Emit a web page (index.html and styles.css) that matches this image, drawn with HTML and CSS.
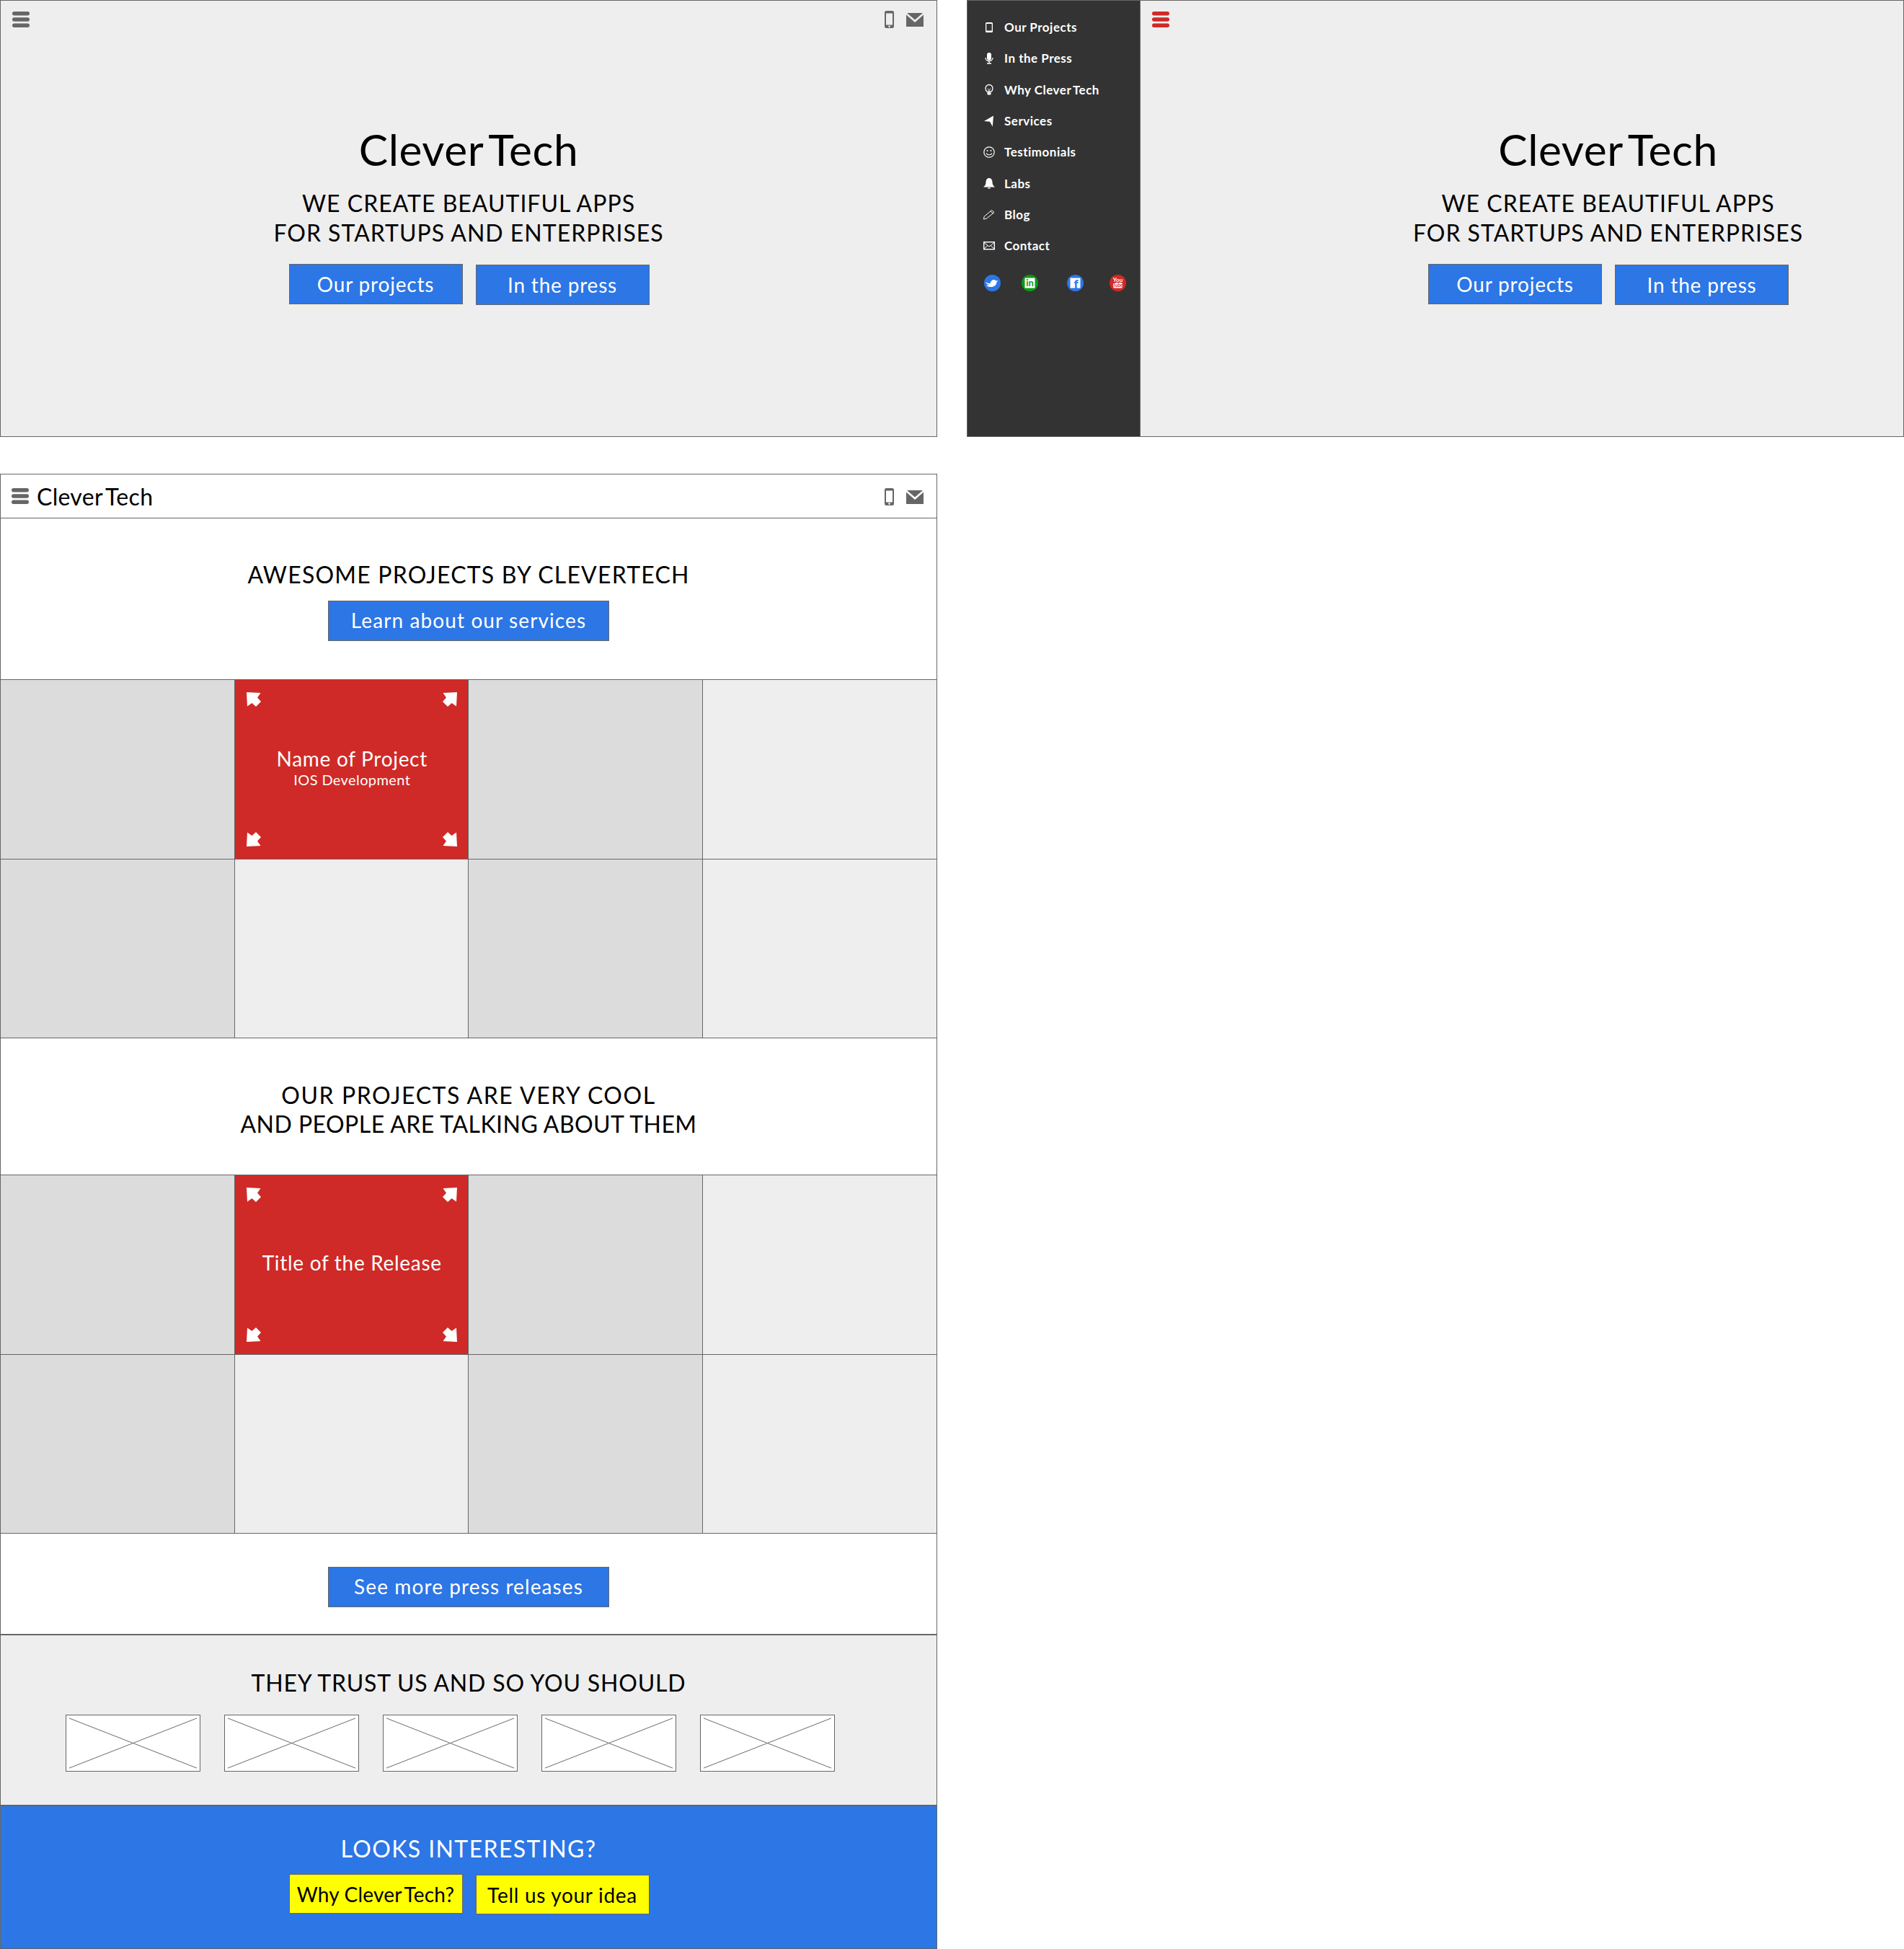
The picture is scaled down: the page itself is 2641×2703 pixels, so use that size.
FILE: index.html
```html
<!DOCTYPE html>
<html lang="en">
<head>
  <meta charset="UTF-8" />
  <title>CleverTech</title>
  <link rel="stylesheet" href="styles.css">
</head>
<body>

  <svg class="sprites" xmlns="http://www.w3.org/2000/svg">
    <symbol id="i-menu" viewBox="0 0 24 22">
      <rect x="0" y="0" width="24" height="5.5" rx="2.7"/>
      <rect x="0" y="8.2" width="24" height="5.5" rx="2.7"/>
      <rect x="0" y="16.5" width="24" height="5.5" rx="2.7"/>
    </symbol>
    <symbol id="i-phone" viewBox="0 0 13 24">
      <path fill-rule="evenodd" d="M2.5 0h8A2.5 2.5 0 0 1 13 2.5v19a2.500 2.500 0 0 1-2.500 2.500h-8A2.500 2.500 0 0 1 0 21.500v-19A2.500 2.500 0 0 1 2.500 0zM2 3.500V19.500H11V3.500zM6.500 20.300a1.300 1.300 0 1 0 .01 0z"/>
    </symbol>
    <symbol id="i-mail" viewBox="0 0 24 19">
      <path d="M1 0H23L12 9.500zM0 2.500L12 13 24 2.500V19H0z"/>
    </symbol>
    <symbol id="i-arrow" viewBox="0 0 20 20">
      <path d="M0 0L19.500 1 15 7.500 20 13 13 20 7.500 15 1 19.500z" stroke-linejoin="round"/>
    </symbol>
    <symbol id="i-mic" viewBox="0 0 16 16">
      <rect x="5" y="0" width="6" height="10.500" rx="3"/>
      <path d="M3 7c0 6 10 6 10 0" fill="none" stroke="#fff" stroke-width="1.300"/>
      <path d="M8 12v2.500M5 15h6" fill="none" stroke="#fff" stroke-width="1.300"/>
    </symbol>
    <symbol id="i-bulb" viewBox="0 0 16 16">
      <path d="M5.500 11.500C4 10.500 3 9 3 6.500a5 5 0 0 1 10 0c0 2.500-1 4-2.500 5z" fill="none" stroke="#fff" stroke-width="1.300"/>
      <path d="M6 6.500l1.200 1.500v3M10 6.500L8.800 8v3" fill="none" stroke="#fff" stroke-width=".8"/>
      <rect x="5.500" y="12.300" width="5" height="3.200" rx="1"/>
    </symbol>
    <symbol id="i-send" viewBox="0 0 16 16">
      <path d="M14 0.500L12.800 15.500 9 8.700 1 8z"/>
    </symbol>
    <symbol id="i-smile" viewBox="0 0 16 16">
      <circle cx="8" cy="8" r="7.200" fill="none" stroke="#fff" stroke-width="1.200"/>
      <circle cx="5.500" cy="6" r="1"/>
      <circle cx="10.500" cy="6" r="1"/>
      <path d="M4 9.500c1.500 3 6.500 3 8 0" fill="none" stroke="#fff" stroke-width="1.200"/>
    </symbol>
    <symbol id="i-bell" viewBox="0 0 16 16">
      <path d="M8 1c3 0 4.500 2.500 4.500 5.500 0 3 1 5 3.500 7H0c2.500-2 3.500-4 3.500-7C3.500 3.500 5 1 8 1z"/>
      <path d="M6 14.300h4a2 1.500 0 0 1-4 0z"/>
    </symbol>
    <symbol id="i-pencil" viewBox="0 0 16 16">
      <path d="M1 11.500L11.500 2.500 15 5.500 4.500 14 .5 15z" fill="none" stroke="#fff" stroke-width="1"/>
      <path d="M10 4l3.500 3" fill="none" stroke="#fff" stroke-width="1"/>
    </symbol>
    <symbol id="i-envelope" viewBox="0 0 16 16">
      <rect x=".7" y="2.700" width="14.600" height="10" fill="none" stroke="#fff" stroke-width="1.400"/>
      <path d="M1 3.500l7 5.500 7-5.500M1 12l5-4.500M15 12l-5-4.500" fill="none" stroke="#fff" stroke-width="1"/>
    </symbol>
    <symbol id="i-outline-phone" viewBox="0 0 10 14">
      <path fill="#fff" fill-rule="evenodd" d="M1.500 0h7A1.500 1.500 0 0 1 10 1.500v11A1.500 1.500 0 0 1 8.500 14h-7A1.500 1.500 0 0 1 0 12.500v-11A1.500 1.500 0 0 1 1.500 0zM1.300 2v9.500h7.400V2z"/>
    </symbol>
  </svg>

  <!-- landing -->
  <section class="frame frame-hero">
    <header class="topbar">
      <svg class="icon-menu"><use href="#i-menu"/></svg>
      <div class="top-icons">
        <svg class="icon-phone"><use href="#i-phone"/></svg>
        <svg class="icon-mail"><use href="#i-mail"/></svg>
      </div>
    </header>
    <div class="hero">
      <h1 class="brand"><span class="brand-first">Clever</span>Tech</h1>
      <p class="headline">WE CREATE BEAUTIFUL APPS<br>FOR STARTUPS AND ENTERPRISES</p>
      <div class="btn-row">
        <a class="btn">Our projects</a>
        <a class="btn low">In the press</a>
      </div>
    </div>
  </section>

  <!-- landing with menu open -->
  <section class="frame frame-open">
    <nav class="sidebar">
      <ul class="nav-list">
        <li><svg class="nav-icon nav-phone"><use href="#i-outline-phone"/></svg><span>Our Projects</span></li>
        <li><svg class="nav-icon"><use href="#i-mic"/></svg><span>In the Press</span></li>
        <li><svg class="nav-icon"><use href="#i-bulb"/></svg><span>Why <span class="brand-first">Clever</span>Tech</span></li>
        <li><svg class="nav-icon"><use href="#i-send"/></svg><span>Services</span></li>
        <li><svg class="nav-icon"><use href="#i-smile"/></svg><span>Testimonials</span></li>
        <li><svg class="nav-icon"><use href="#i-bell"/></svg><span>Labs</span></li>
        <li><svg class="nav-icon"><use href="#i-pencil"/></svg><span>Blog</span></li>
        <li><svg class="nav-icon"><use href="#i-envelope"/></svg><span>Contact</span></li>
      </ul>
      <div class="social">
        <svg viewBox="0 0 23 23"><circle cx="11.500" cy="11.500" r="11.500" fill="#2c76e6"/><path fill="#fff" d="M2 10c2 1.500 4 2 6.500 2 .5-3 2.500-5 5-5 1.500 0 2.500.7 3 1.500l3-.5-2 2c0 4-3 7-8 7-2.500 0-5-.8-6.500-2.200 1.500 0 2.800-.3 3.800-1-2.500-.5-4.300-1.800-4.800-3.800z"/></svg>
        <svg viewBox="0 0 23 23"><circle cx="11.500" cy="11.500" r="11.500" fill="#0a9a16"/><rect x="4.500" y="4.500" width="14" height="14" fill="#fff"/><text x="11.500" y="16" class="mark mark-in">in</text></svg>
        <svg viewBox="0 0 23 23"><circle cx="11.500" cy="11.500" r="11.500" fill="#2c76e6"/><rect x="4.500" y="4.500" width="14" height="14" fill="#fff"/><text x="12.500" y="18.500" class="mark mark-f">f</text></svg>
        <svg viewBox="0 0 23 23"><circle cx="11.500" cy="11.500" r="11.500" fill="#cf2a27"/><text x="11.500" y="9.500" class="mark mark-yt" fill="#fff">You</text><rect x="5" y="11" width="13" height="7.500" rx="2" fill="#fff"/><text x="11.500" y="17" class="mark mark-tube">Tube</text></svg>
      </div>
    </nav>
    <div class="main-pane">
      <header class="topbar">
        <svg class="icon-menu red"><use href="#i-menu"/></svg>
      </header>
      <div class="hero">
        <h1 class="brand"><span class="brand-first">Clever</span>Tech</h1>
        <p class="headline">WE CREATE BEAUTIFUL APPS<br>FOR STARTUPS AND ENTERPRISES</p>
        <div class="btn-row">
          <a class="btn">Our projects</a>
          <a class="btn low">In the press</a>
        </div>
      </div>
    </div>
  </section>

  <!-- scrolled page -->
  <section class="frame frame-page">
    <header class="pagebar">
      <div class="pagebar-left">
        <svg class="icon-menu"><use href="#i-menu"/></svg>
        <span class="brand-small"><span class="brand-first">Clever</span>Tech</span>
      </div>
      <div class="top-icons">
        <svg class="icon-phone"><use href="#i-phone"/></svg>
        <svg class="icon-mail"><use href="#i-mail"/></svg>
      </div>
    </header>

    <div class="intro">
      <h2 class="title title-wide">AWESOME PROJECTS BY CLEVERTECH</h2>
      <a class="btn wide">Learn about our services</a>
    </div>

    <div class="tiles">
      <div class="tile dark"></div>
      <div class="tile active">
        <svg class="arrow tl"><use href="#i-arrow"/></svg>
        <svg class="arrow tr"><use href="#i-arrow"/></svg>
        <svg class="arrow bl"><use href="#i-arrow"/></svg>
        <svg class="arrow br"><use href="#i-arrow"/></svg>
        <div class="tile-name">Name of Project</div>
        <div class="tile-sub">IOS Development</div>
      </div>
      <div class="tile dark"></div>
      <div class="tile"></div>
      <div class="tile dark"></div>
      <div class="tile"></div>
      <div class="tile dark"></div>
      <div class="tile"></div>
    </div>

    <div class="statement">
      <h2 class="title title-tight"><span class="spread">OUR PROJECTS ARE VERY COOL</span><br>AND PEOPLE ARE TALKING ABOUT THEM</h2>
    </div>

    <div class="tiles">
      <div class="tile dark"></div>
      <div class="tile active">
        <svg class="arrow tl"><use href="#i-arrow"/></svg>
        <svg class="arrow tr"><use href="#i-arrow"/></svg>
        <svg class="arrow bl"><use href="#i-arrow"/></svg>
        <svg class="arrow br"><use href="#i-arrow"/></svg>
        <div class="tile-name">Title of the Release</div>
      </div>
      <div class="tile dark"></div>
      <div class="tile"></div>
      <div class="tile dark"></div>
      <div class="tile"></div>
      <div class="tile dark"></div>
      <div class="tile"></div>
    </div>

    <div class="more">
      <a class="btn wide">See more press releases</a>
    </div>

    <div class="trust">
      <h2 class="title">THEY TRUST US AND SO YOU SHOULD</h2>
      <div class="logos">
        <svg class="logo" viewBox="0 0 187 79" preserveAspectRatio="none"><path d="M4 4L183 75M183 4L4 75"/></svg>
        <svg class="logo" viewBox="0 0 187 79" preserveAspectRatio="none"><path d="M4 4L183 75M183 4L4 75"/></svg>
        <svg class="logo" viewBox="0 0 187 79" preserveAspectRatio="none"><path d="M4 4L183 75M183 4L4 75"/></svg>
        <svg class="logo" viewBox="0 0 187 79" preserveAspectRatio="none"><path d="M4 4L183 75M183 4L4 75"/></svg>
        <svg class="logo" viewBox="0 0 187 79" preserveAspectRatio="none"><path d="M4 4L183 75M183 4L4 75"/></svg>
      </div>
    </div>

    <div class="cta">
      <h2 class="title title-cta">LOOKS INTERESTING?</h2>
      <div class="btn-row">
        <a class="btn yellow snug"><span>Why <span class="brand-first">Clever</span>Tech?</span></a>
        <a class="btn yellow low">Tell us your idea</a>
      </div>
    </div>
  </section>

</body>
</html>
```

FILE: styles.css
```css
:root {
  --line: #666;
  --light: #eee;
  --mid: #dcdcdc;
  --blue: #2c76e6;
  --red: #cf2a27;
  --dark: #333;
}
* { box-sizing: border-box; }
html, body { margin: 0; }
body {
  width: 2641px;
  height: 2703px;
  overflow: hidden;
  background: #fff;
  color: #000;
  font-family: 'Lato', sans-serif;
  display: grid;
  grid-template-columns: 1300px 1300px;
  grid-template-rows: 606px 2046px;
  column-gap: 41px;
  row-gap: 51px;
}
.sprites { display: none; }

.frame {
  border: 1.5px solid var(--line);
  overflow: hidden;
  background: var(--light);
}
.frame-page {
  grid-column: 1;
  background: #fff;
  display: flex;
  flex-direction: column;
}
.frame-open { display: flex; }

/* top bars */
.topbar {
  display: flex;
  justify-content: space-between;
  padding: 15px 17px 0 16px;
  height: 51px;
}
.icon-menu { width: 24px; height: 22px; fill: var(--line); display: block; }
.icon-menu.red { fill: var(--red); }
.top-icons { display: flex; align-items: center; gap: 17px; height: 24px; padding-right: 1px; }
.topbar .top-icons { margin-top: -1px; }
.pagebar .top-icons { margin-top: 2px; }
.icon-phone { width: 13px; height: 24px; fill: var(--line); }
.icon-mail { width: 24px; height: 19px; fill: var(--line); }

.pagebar {
  height: 61px;
  flex: none;
  border-bottom: 1.5px solid var(--line);
  display: flex;
  justify-content: space-between;
  align-items: center;
  padding: 0 17px 0 15px;
}
.pagebar-left { display: flex; align-items: center; gap: 11px; }
.brand-small { font-size: 32px; letter-spacing: 0.3px; }
.brand-first { margin-right: 0.1em; }

/* hero */
.hero { display: flex; flex-direction: column; align-items: center; }
.brand {
  margin: 120px 0 0;
  font-size: 60.5px;
  line-height: 70px;
  font-weight: 400;
  letter-spacing: 0.5px;
}
.headline {
  margin: 19px 0 0;
  font-size: 32px;
  line-height: 41px;
  text-align: center;
  letter-spacing: 1px;
}
.btn-row { display: flex; gap: 18px; align-items: flex-start; margin-left: 1px; }
.hero .btn-row { margin-top: 23px; }
.btn {
  display: flex;
  align-items: center;
  justify-content: center;
  width: 241px;
  height: 56px;
  background: var(--blue);
  color: #fff;
  border: 1px solid var(--line);
  font-size: 28px;
  letter-spacing: 0.8px;
}
.btn.low { margin-top: 1px; }
.btn.wide { width: 390px; letter-spacing: 1.1px; padding-bottom: 3px; }
.btn.yellow { background: #ff0; color: #000; height: 55px; letter-spacing: 0.7px; }
.btn.snug { letter-spacing: 0.2px; }

/* open menu */
.sidebar {
  flex: 0 0 240px;
  background: var(--dark);
  color: #fff;
  border-right: 1.5px solid var(--line);
  padding: 15px 0 0 22px;
}
.nav-list { list-style: none; margin: 0; padding: 0; }
.nav-list li {
  height: 43.3px;
  display: flex;
  align-items: center;
  font-size: 17px;
  letter-spacing: 0.5px;
  font-weight: 700;
}
.nav-icon { width: 16px; height: 16px; margin-right: 13px; fill: #fff; flex: none; }
.nav-phone { width: 10px; height: 14px; margin: 0 16px 0 3px; }
.social {
  display: grid;
  grid-template-columns: 52px 63px 59px 23px;
  margin: 19px 0 0 1px;
}
.social svg { width: 23px; height: 23px; display: block; }
.mark { font-family: 'Lato', sans-serif; font-weight: 700; text-anchor: middle; }
.mark-in { font-size: 13px; fill: #0a9a16; }
.mark-f { font-size: 17px; fill: #2c76e6; font-weight: 900; }
.mark-yt { font-size: 8px; }
.mark-tube { font-size: 6.500px; fill: #cf2a27; }
.main-pane { flex: 0 0 1297px; }

/* sections of the page */
.title {
  margin: 0;
  font-size: 32px;
  line-height: 41px;
  font-weight: 400;
  text-align: center;
  letter-spacing: 0.8px;
}
.title-wide { letter-spacing: 1.2px; }
.title-tight { letter-spacing: 0.45px; line-height: 40px; }
.title-tight .spread { letter-spacing: 1.55px; }
.title-cta { letter-spacing: 1.4px; }
.intro {
  height: 224px;
  flex: none;
  padding-top: 57px;
  display: flex;
  flex-direction: column;
  align-items: center;
  gap: 16px;
}
.statement {
  height: 190px;
  flex: none;
  padding-top: 59px;
}
.more {
  height: 141px;
  flex: none;
  border-bottom: 2px solid var(--line);
  display: flex;
  justify-content: center;
  padding-top: 46px;
}

/* tile grid */
.tiles {
  flex: none;
  display: grid;
  grid-template-columns: repeat(4, 1fr);
  grid-template-rows: repeat(2, 248px);
  border-top: 1.5px solid var(--line);
  border-bottom: 1.5px solid var(--line);
  margin-top: -1px;
}
.tile {
  position: relative;
  background: var(--light);
  border-right: 1px solid var(--line);
  display: flex;
  flex-direction: column;
  align-items: center;
  justify-content: center;
  color: #fff;
}
.tile:nth-child(4n) { border-right: none; }
.tile:nth-child(n+5) { border-top: 1.5px solid var(--line); }
.tile.dark { background: var(--mid); }
.tile.active { background: var(--red); padding-left: 2px; }
.tile-name { font-size: 28px; line-height: 34px; letter-spacing: 0.7px; margin-top: -6px; }
.tile-sub { font-size: 20px; line-height: 24px; letter-spacing: 0.4px; }
.arrow { position: absolute; width: 20px; height: 20px; fill: #fff; }
.arrow.tl { left: 16px; top: 17px; }
.arrow.tr { right: 15px; top: 17px; transform: scaleX(-1); }
.arrow.bl { left: 16px; bottom: 17px; transform: scaleY(-1); }
.arrow.br { right: 15px; bottom: 17px; transform: scale(-1, -1); }

/* clients */
.trust {
  height: 235px;
  flex: none;
  background: var(--light);
  padding-top: 45px;
}
.logos {
  display: flex;
  gap: 33px;
  padding-left: 90px;
  margin-top: 24px;
}
.logo {
  width: 187px;
  height: 79px;
  background: #fff;
  border: 1px solid var(--line);
  fill: none;
  stroke: var(--line);
  stroke-width: 1;
}

/* bottom call to action */
.cta {
  flex: 1;
  margin: 0 -1.5px;
  border-top: 2px solid var(--line);
  background: var(--blue);
  color: #fff;
  display: flex;
  flex-direction: column;
  align-items: center;
  padding-top: 38px;
  gap: 15px;
}
```
